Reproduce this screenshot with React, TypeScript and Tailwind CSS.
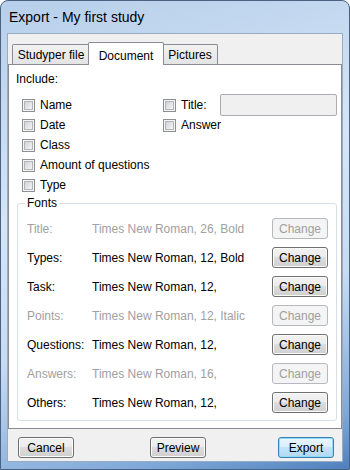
import React from "react";

function CheckBox() {
  return (
    <span className="block w-[13px] h-[13px] shrink-0 border border-[#8e8f8f] bg-[#f4f4f4] p-[1px]">
      <span className="block w-full h-full border border-[#b3b7bc] bg-[linear-gradient(135deg,#d0d3d8,#f4f4f4)]" />
    </span>
  );
}

function Check({ label }: { label: string }) {
  return (
    <div className="flex items-center h-[20px] gap-[5px]">
      <CheckBox />
      <span>{label}</span>
    </div>
  );
}

function Btn({ children, disabled, primary, className = "" }: any) {
  let look =
    "border-[#707070] text-black bg-[linear-gradient(to_bottom,#f2f2f2_0%,#ebebeb_50%,#dddddd_50%,#cfcfcf_100%)] shadow-[inset_0_0_0_1px_#fbfbfb]";
  if (disabled) look = "border-[#b5b9bd] text-[#a0a0a0] bg-[#f4f4f4]";
  if (primary)
    look =
      "border-[#3c7fb1] text-black bg-[linear-gradient(to_bottom,#e9f5fc_0%,#d9eefa_50%,#c3e4f7_50%,#b1d9f2_100%)] shadow-[inset_0_0_0_1px_#8fdcf8]";
  return (
    <button
      className={`h-[21px] w-[56px] rounded-[3px] border text-[12px] leading-none flex items-center justify-center shrink-0 ${look} ${className}`}
    >
      {children}
    </button>
  );
}

const fonts = [
  { label: "Title:", value: "Times New Roman, 26, Bold", disabled: true },
  { label: "Types:", value: "Times New Roman, 12, Bold" },
  { label: "Task:", value: "Times New Roman, 12," },
  { label: "Points:", value: "Times New Roman, 12, Italic", disabled: true },
  { label: "Questions:", value: "Times New Roman, 12," },
  { label: "Answers:", value: "Times New Roman, 16,", disabled: true },
  { label: "Others:", value: "Times New Roman, 12," },
];

export default function App() {
  return (
    <div className="w-[350px] h-[470px] overflow-hidden font-['Liberation_Sans',Arial,sans-serif] text-[12px] text-black">
      <div className="w-full h-full flex flex-col rounded-t-[8px] border border-[#4a6180] px-[6px] pb-[7px] bg-[linear-gradient(165deg,#b7cfea_0%,#d4e5f7_40%,#c6dcf3_65%,#7fa8d8_90%,#4f80bd_100%)]">
        {/* title bar */}
        <div className="h-[32px] flex items-center pl-[2px] text-[14px] shrink-0">
          Export - My first study
        </div>

        {/* client */}
        <div className="flex-1 flex flex-col border border-[#97abc4] bg-[#f0f0f0]">
          {/* tabs */}
          <div className="h-[30px] flex items-end pl-[4px] shrink-0">
            <div className="h-[20px] w-[78px] flex items-center justify-center border border-b-0 border-[#898c95] rounded-t-[2px] bg-[linear-gradient(to_bottom,#f2f2f2,#e3e3e3)]">
              Studyper file
            </div>
            <div className="h-[23px] w-[76px] -mx-[2px] -mb-px relative z-10 flex items-start pt-[4px] justify-center border border-b-0 border-[#898c95] rounded-t-[2px] bg-white">
              Document
            </div>
            <div className="h-[20px] w-[56px] flex items-center justify-center border border-b-0 border-[#898c95] rounded-t-[2px] bg-[linear-gradient(to_bottom,#f2f2f2,#e3e3e3)]">
              Pictures
            </div>
          </div>

          {/* tab panel */}
          <div className="h-[365px] border border-[#898c95] bg-white shrink-0">
            <div className="mt-[7px] pl-[7px] leading-[14px]">Include:</div>

            <div className="flex mt-[9px] pl-[13px]">
              <div className="w-[141px] flex flex-col">
                <Check label="Name" />
                <Check label="Date" />
                <Check label="Class" />
                <Check label="Amount of questions" />
                <Check label="Type" />
              </div>
              <div className="flex flex-col">
                <div className="flex items-center h-[20px]">
                  <CheckBox />
                  <span className="ml-[5px] w-[39px]">Title:</span>
                  <div className="w-[117px] h-[22px] border border-[#abadb3] rounded-[2px] bg-[#f0f0f0]" />
                </div>
                <Check label="Answer" />
              </div>
            </div>

            {/* fonts group */}
            <div className="relative mt-[8px] ml-[8px] w-[320px] h-[218px] border border-[#d5dfe5] rounded-[3px] pt-[14px] pl-[9px] pr-[8px]">
              <span className="absolute left-[7px] -top-[8px] px-[2px] bg-white leading-[14px]">Fonts</span>
              <div className="flex flex-col gap-[8px]">
                {fonts.map((f) => (
                  <div
                    key={f.label}
                    className={`flex items-center h-[21px] ${f.disabled ? "text-[#a0a0a0]" : "text-black"}`}
                  >
                    <span className="w-[65px] shrink-0">{f.label}</span>
                    <span className="flex-1">{f.value}</span>
                    <Btn disabled={f.disabled}>Change</Btn>
                  </div>
                ))}
              </div>
            </div>
          </div>

          {/* bottom buttons */}
          <div className="flex mt-[8px] pl-[10px]">
            <Btn>Cancel</Btn>
            <Btn className="ml-[76px]">Preview</Btn>
            <Btn primary className="ml-[72px]">Export</Btn>
          </div>
        </div>
      </div>
    </div>
  );
}
